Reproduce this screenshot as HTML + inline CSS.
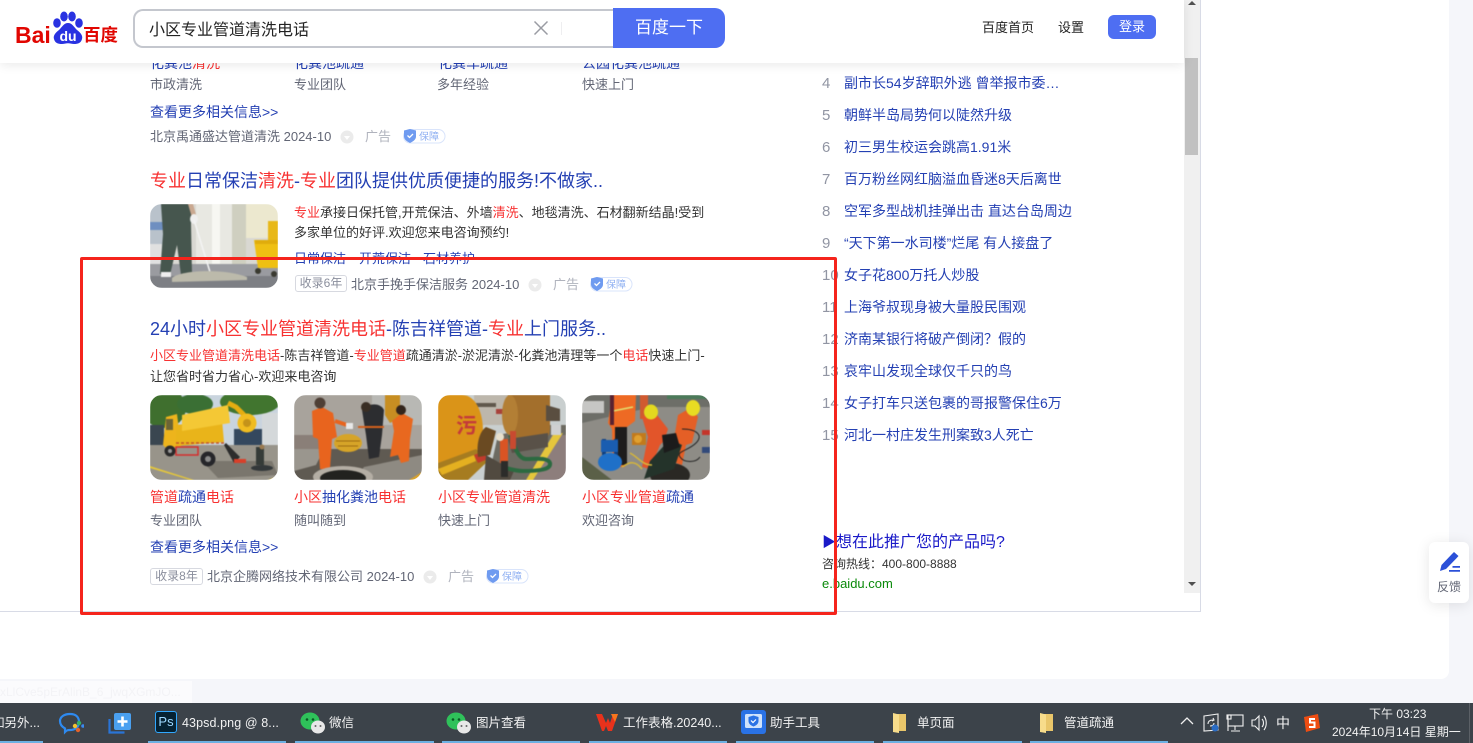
<!DOCTYPE html>
<html lang="zh"><head><meta charset="utf-8"><title>小区专业管道清洗电话</title>
<style>
html,body{margin:0;padding:0;width:1473px;height:743px;overflow:hidden;background:#f5f6fa}
body{position:relative;font-family:"Liberation Sans","Noto Sans CJK SC",sans-serif;font-size:13px;color:#333}
.t{position:absolute;white-space:nowrap;line-height:20px;height:20px}
.b{color:#2440b3}.r{color:#f73131}.g{color:#626675}.l{color:#9195a3}
.h{font-size:18px;line-height:26px;height:26px;color:#2440b3}
.m{font-size:14px}
.n{font-size:15px;margin-top:1px}
.im{position:absolute;border-radius:12px;overflow:hidden;width:128px;height:85px}
.im svg{display:block;filter:blur(.4px)}
.tag{position:absolute;box-sizing:border-box;height:17px;border:1px solid #d7d9e0;border-radius:3px;font-size:12px;line-height:15px;color:#8a8e9c;text-align:center}
.abs{position:absolute}
.tb{position:absolute;white-space:nowrap;color:#f2f2f2;font-size:12.5px;line-height:18px;top:714px}
.ul{position:absolute;top:741px;height:2px;background:#6cb0e2}
</style></head><body>
<!-- page -->
<div class="abs" style="left:0;top:0;width:1449px;height:679px;background:#fff;border-radius:0 0 8px 0"></div>
<div class="abs" style="left:0;top:611px;width:1201px;height:1px;background:#d8dbe6"></div>
<div class="abs" style="left:1200px;top:0;width:1px;height:612px;background:#d8dbe6"></div>
<div class="abs" style="left:1184px;top:0;width:16px;height:593px;background:#f0f0f0"></div>
<div class="abs" style="left:1185px;top:58px;width:13px;height:97px;background:#c1c1c1"></div>
<div class="abs" style="left:1188px;top:1px;width:0;height:0;border:4px solid transparent;border-top:0;border-bottom:4px solid #505050"></div>
<div class="abs" style="left:1188px;top:582px;width:0;height:0;border:4px solid transparent;border-bottom:0;border-top:4px solid #505050"></div>
<div class="abs" style="left:0;top:681px;width:192px;height:22px;background:#fbfbfd;color:#f3f3f6;font-size:12px;line-height:22px;white-space:nowrap;overflow:hidden">xLlCve5pErAlinB_6_jwqXGmJO...</div>

<!-- result 1 tail -->
<div class="t m" style="left:150px;top:53px"><span class="b">化粪池</span><span class="r">清洗</span></div>
<div class="t m b" style="left:294px;top:53px">化粪池疏通</div>
<div class="t m b" style="left:438px;top:53px">化粪车疏通</div>
<div class="t m b" style="left:582px;top:53px">公园化粪池疏通</div>
<div class="t g" style="left:150px;top:75px">市政清洗</div>
<div class="t g" style="left:294px;top:75px">专业团队</div>
<div class="t g" style="left:437px;top:75px">多年经验</div>
<div class="t g" style="left:582px;top:75px">快速上门</div>
<div class="t m b" style="left:150px;top:102px">查看更多相关信息&gt;&gt;</div>
<div class="t g" style="left:150px;top:127px">北京禹通盛达管道清洗 2024-10</div>
<svg class="abs" style="left:340px;top:130px" width="14" height="14"><circle cx="7" cy="7" r="6.5" fill="#ebebeb"/><path d="M4 6h6l-3 4z" fill="#fff"/></svg>
<div class="t" style="left:365px;top:127px;color:#b0b3bd">广告</div>
<svg class="abs" style="left:403px;top:128px" width="43" height="16"><rect x=".5" y="1.5" width="41.5" height="13.5" rx="6.7" fill="#fff" stroke="#d9e4fb"/><path d="M1 2.500l6-1.500 6 1.500v6c0 3-3 5-6 6.500-3-1.500-6-3.500-6-6.500z" fill="#6f9bf0"/><path d="M4.500 7.500l2 2 3.500-3.500" stroke="#fff" stroke-width="1.300" fill="none"/><text x="16" y="12" font-size="10" fill="#8fb0f2" font-family="Noto Sans CJK SC">保障</text></svg>

<!-- result 2 -->
<div class="t h" style="left:150px;top:168px"><span class="r">专业</span>日常保洁<span class="r">清洗</span>-<span class="r">专业</span>团队提供优质便捷的服务!不做家..</div>
<div class="im" style="left:150px;top:204px;height:84px"><svg width="128" height="84" viewBox="0 0 128 84">
<rect width="128" height="84" fill="#d9d8d2"/>
<rect x="0" y="0" width="16" height="60" fill="#b9c2cb"/><rect x="0" y="18" width="14" height="8" fill="#6f8fc0"/><rect x="0" y="40" width="12" height="22" fill="#e0e0e0"/>
<rect x="46" y="0" width="36" height="60" fill="#e8e8e2"/><rect x="62" y="0" width="8" height="62" fill="#f7f7f2"/><rect x="82" y="0" width="14" height="60" fill="#cfcfc0"/><rect x="96" y="0" width="32" height="34" fill="#ece8cf"/>
<rect x="118" y="17" width="10" height="22" fill="#e8b818"/>
<rect x="0" y="60" width="128" height="24" fill="#9a9ba0"/><rect x="0" y="72" width="128" height="12" fill="#7d7f84"/>
<path d="M11 0h31l-1 20 1 50-11 1-4-30-7 30-10-1 3-40z" fill="#46564e"/><path d="M38 0l5 0 4 14-4 3z" fill="#c9a890"/>
<ellipse cx="44" cy="15" rx="4" ry="5" fill="#efefef"/><path d="M44 16l16 52" stroke="#f4f4f4" stroke-width="1.500"/>
<path d="M22 74c8-8 52-10 75-1l0 3-75 2z" fill="#bcbaab"/><rect x="11" y="68" width="10" height="5" fill="#eee"/>
<path d="M104 36h24v28h-20z" fill="#efc013"/><rect x="105" y="36" width="23" height="4" fill="#e0ac0c"/><circle cx="108" cy="67" r="3" fill="#3a3a30"/><circle cx="124" cy="70" r="3" fill="#3a3a30"/>
</svg></div>
<div class="t" style="left:294px;top:203px"><span class="r">专业</span>承接日保托管,开荒保洁、外墙<span class="r">清洗</span>、地毯清洗、石材翻新结晶!受到</div>
<div class="t" style="left:294px;top:223px">多家单位的好评.欢迎您来电咨询预约!</div>
<div class="t b" style="left:294px;top:249px">日常保洁</div>
<div class="t b" style="left:359px;top:249px">开荒保洁</div>
<div class="t b" style="left:423px;top:249px">石材养护</div>
<div class="tag" style="left:295px;top:275px;width:52px">收录6年</div>
<div class="t g" style="left:351px;top:275px">北京手挽手保洁服务 2024-10</div>
<svg class="abs" style="left:528px;top:278px" width="14" height="14"><circle cx="7" cy="7" r="6.500" fill="#ebebeb"/><path d="M4 6h6l-3 4z" fill="#fff"/></svg>
<div class="t" style="left:553px;top:275px;color:#b0b3bd">广告</div>
<svg class="abs" style="left:590px;top:276px" width="43" height="16"><rect x=".5" y="1.500" width="41.500" height="13.500" rx="6.700" fill="#fff" stroke="#d9e4fb"/><path d="M1 2.500l6-1.500 6 1.500v6c0 3-3 5-6 6.500-3-1.500-6-3.500-6-6.500z" fill="#6f9bf0"/><path d="M4.500 7.500l2 2 3.500-3.500" stroke="#fff" stroke-width="1.300" fill="none"/><text x="16" y="12" font-size="10" fill="#8fb0f2" font-family="Noto Sans CJK SC">保障</text></svg>

<!-- result 3 -->
<div class="t h" style="left:150px;top:316px">24小时<span class="r">小区专业管道清洗电话</span>-陈吉祥管道-<span class="r">专业</span>上门服务..</div>
<div class="t" style="left:150px;top:346px"><span class="r">小区专业管道清洗电话</span>-陈吉祥管道-<span class="r">专业管道</span>疏通清淤-淤泥清淤-化粪池清理等一个<span class="r">电话</span>快速上门-</div>
<div class="t" style="left:150px;top:367px">让您省时省力省心-欢迎来电咨询</div>

<div class="im" style="left:150px;top:395px"><svg width="128" height="85" viewBox="0 0 128 85">
<rect width="128" height="85" fill="#c9d4de"/>
<rect x="112" y="18" width="16" height="44" fill="#d4d8da"/><rect x="84" y="34" width="28" height="18" fill="#34485e"/>
<ellipse cx="14" cy="13" rx="22" ry="20" fill="#3f6f2e"/><ellipse cx="45" cy="9" rx="18" ry="10" fill="#3a6f34"/><ellipse cx="100" cy="7" rx="30" ry="13" fill="#41752f"/>
<rect x="0" y="30" width="14" height="22" fill="#3a4650"/>
<rect x="0" y="50" width="128" height="35" fill="#98948a"/><path d="M52 66h70l6 14-60 3z" fill="#7a766d"/>
<path d="M0 71l44 14h-4L0 73z" fill="#e5c73a"/><path d="M118 85l10-4v4z" fill="#e5c73a"/>
<path d="M13 50l3-28 11-3 4 32-14 3z" fill="#edb41c"/><rect x="16" y="24" width="7" height="11" fill="#6c6436"/>
<path d="M26 30l46-5 2 22-48 4z" fill="#e9b41a"/><path d="M32 20l46-10 2 18-48 8z" fill="#f4c835"/>
<path d="M78 8l8 4 8 8" stroke="#e5ad10" stroke-width="5" fill="none"/><circle cx="97" cy="28" r="9.500" fill="#f0bc20"/><circle cx="97" cy="28" r="4" fill="#c4931a"/>
<path d="M26 48l48 0" stroke="#c0502a" stroke-width="1.500" stroke-dasharray="3 2"/>
<rect x="26" y="52" width="22" height="8" fill="none" stroke="#d62c2c" stroke-width="1.500"/>
<circle cx="20" cy="56" r="5.500" fill="#2a2a2a"/><circle cx="20" cy="56" r="2" fill="#999"/><circle cx="58" cy="64" r="7.500" fill="#26262a"/><circle cx="58" cy="64" r="3" fill="#8a8a8a"/>
<path d="M76 48l14 14-6 6-10-18z" fill="#2c2c2c"/><rect x="84" y="64" width="12" height="4" fill="#d8402a"/>
<rect x="106" y="52" width="8" height="18" fill="#353b38"/><circle cx="112" cy="52" r="2.500" fill="#9a7a50"/><ellipse cx="112" cy="73" rx="11" ry="3" fill="#33383a"/>
</svg></div>
<div class="im" style="left:294px;top:395px"><svg width="128" height="85" viewBox="0 0 128 85">
<rect width="128" height="85" fill="#a8a39c"/><rect x="0" y="40" width="30" height="14" fill="#8a7f78"/>
<rect x="78" y="0" width="50" height="30" fill="#b8b8b4"/><path d="M91 0h15v22l-10 6-5-8z" fill="#c78e22"/>
<rect x="0" y="54" width="128" height="31" fill="#5f5a52"/><path d="M0 54l30 0-8 16L0 76z" fill="#9a968e"/><path d="M70 72l58-12v25H60z" fill="#8e8a82"/>
<path d="M18 16l10-4 11 6 4 24-5 2-2 30-10 0-2-30-5-2z" fill="#e8641e"/><ellipse cx="26" cy="8" rx="5.500" ry="5.500" fill="#4e3f35"/><path d="M41 26l12 4" stroke="#e8641e" stroke-width="4"/><rect x="52" y="28" width="7" height="6" fill="#e8e8e8"/>
<path d="M68 15c6-7 18-8 22 0l-2 25-3 22-10 2-3-24z" fill="#2c2d30"/><circle cx="72" cy="12" r="5" fill="#3a2e24"/><rect x="64" y="31" width="26" height="2" fill="#d4601c"/>
<ellipse cx="54" cy="48" rx="14" ry="9" fill="#d6a428"/><path d="M42 46h24M44 51h20" stroke="#9c6a14"/>
<path d="M98 26l10-8 11 6-3 20-1 22-8 2-3-8-8 2 4-26z" fill="#e8681f"/><circle cx="107" cy="15" r="5" fill="#33251c"/>
<ellipse cx="49" cy="82" rx="30" ry="11" fill="#b4aea4"/><ellipse cx="49" cy="83" rx="23" ry="8" fill="#22221f"/>
<path d="M115 85l13-8v8z" fill="#dca42a"/>
</svg></div>
<div class="im" style="left:438px;top:395px"><svg width="128" height="85" viewBox="0 0 128 85">
<rect width="128" height="85" fill="#c9cfcf"/><rect x="36" y="0" width="36" height="30" fill="#bdb7ac"/><rect x="38" y="8" width="20" height="4" fill="#60584c"/><rect x="58" y="14" width="12" height="5" fill="#a8423a"/>
<path d="M60 40l50-10 18 0v55H50z" fill="#6d6b62"/><path d="M128 40v45H92l22-45z" fill="#8d7e7c"/><path d="M125 38l-10 2-27 45h7z" fill="#e5c63c"/>
<path d="M70 0h42v34c0 5-2 8-6 10l-22 3-8-6-6-24z" fill="#a36f2c"/><ellipse cx="72" cy="20" rx="8" ry="20" fill="#b37f35"/><path d="M70 44l40-6v14l-36 6z" fill="#595148"/>
<path d="M108 10l14 4v12h-14z" fill="#5a4e40"/><rect x="113" y="30" width="10" height="10" fill="#cfd0d0"/>
<path d="M0 0h24c14 0 21 18 21 36 0 7-2 14-4 20L0 68z" fill="#da9418"/><text x="18" y="38" font-size="21" fill="#c43a3a" font-family="Noto Sans CJK SC" font-weight="bold">污</text>
<path d="M0 68l38-14 12 12-20 19H0z" fill="#a67c20"/><path d="M0 74l36-14 2 6L4 80z" fill="#e4b020"/><path d="M36 60l10-4 4 8-10 4z" fill="#c23b2c"/>
<path d="M48 32c-6 4-10 16-8 30l12-2 6-24z" fill="#6a4a22"/><path d="M48 60l28 16-4 9H46z" fill="#514a40"/>
<path d="M72 40c4 10 8 24 16 24s22-2 24 4c1 6-8 8-28 8-6 0-12-2-20-4" stroke="#2c6a40" stroke-width="4" fill="none"/>
<rect x="62" y="44" width="8" height="24" fill="#d95424"/><circle cx="62" cy="42" r="4" fill="#e8e0cc"/><rect x="63" y="66" width="7" height="16" fill="#2c2c2a"/><rect x="72" y="36" width="6" height="18" fill="#c84a30"/>
</svg></div>
<div class="im" style="left:582px;top:395px"><svg width="128" height="85" viewBox="0 0 128 85">
<rect width="128" height="85" fill="#8e8c86"/><path d="M0 28l70-16h58V0H0z" fill="#6d6e68"/><rect x="0" y="6" width="22" height="12" fill="#c6c6c4"/>
<path d="M0 62l30 23H0z" fill="#5b6048"/><path d="M85 0h40v4H85z" fill="#4c7a5a"/>
<path d="M30 0h24l-1 26-8 6-2 40-12 0-1-38-4-6z" fill="#ee6a24"/><path d="M31 16l20-4" stroke="#e3e070" stroke-width="1.500"/><rect x="33" y="32" width="12" height="38" fill="#1d1c1c"/><rect x="28" y="0" width="4" height="30" fill="#5a2230"/>
<path d="M58 0h8v24h-8z" fill="#d05a30"/>
<path d="M60 22l12-6 14 18-4 12-4 4-10 24-8-2 6-30z" fill="#e2552a"/><ellipse cx="69" cy="17" rx="7" ry="7.500" fill="#e3d91f"/>
<path d="M96 20l14-8 6 10-6 26-6 2-4 20-6-2-2-24z" fill="#e45f26"/><ellipse cx="111" cy="13" rx="7" ry="8" fill="#e8dc22"/>
<rect x="50" y="38" width="14" height="12" fill="#c27a1c"/><circle cx="56" cy="44" r="4" fill="#e0a030"/>
<rect x="20" y="44" width="4" height="16" fill="#123e7a"/><rect x="32" y="44" width="4" height="16" fill="#123e7a"/><rect x="19" y="45" width="17" height="12" fill="#1a5db0"/><ellipse cx="28" cy="67" rx="12" ry="9" fill="#1f70c8"/>
<ellipse cx="88" cy="80" rx="20" ry="12" fill="#2a2824"/><path d="M62 84l6-18 20-22 12 6-8 24z" fill="#24332a"/><path d="M80 40l14-2 4 14-16 6z" fill="#1b1b1b"/>
<path d="M100 34c14 0 22 6 14 14s-20 8-16 14 16 6 20 0" stroke="#222" fill="none"/><path d="M48 58c8 4 12 12 22 12M40 72c6-4 12-8 20 2" stroke="#d6b63a" stroke-width="1.500" fill="none"/>
<rect x="120" y="35" width="8" height="5" fill="#c4352a"/><rect x="120" y="52" width="8" height="6" fill="#324a7a"/>
</svg></div>

<div class="t m" style="left:150px;top:487px"><span class="r">管道</span><span class="b">疏通</span><span class="r">电话</span></div>
<div class="t m" style="left:294px;top:487px"><span class="r">小区</span><span class="b">抽化粪池</span><span class="r">电话</span></div>
<div class="t m r" style="left:438px;top:487px">小区专业管道清洗</div>
<div class="t m" style="left:582px;top:487px"><span class="r">小区专业管道</span><span class="b">疏通</span></div>
<div class="t g" style="left:150px;top:511px">专业团队</div>
<div class="t g" style="left:294px;top:511px">随叫随到</div>
<div class="t g" style="left:438px;top:511px">快速上门</div>
<div class="t g" style="left:582px;top:511px">欢迎咨询</div>
<div class="t m b" style="left:150px;top:537px">查看更多相关信息&gt;&gt;</div>
<div class="tag" style="left:150px;top:568px;width:53px">收录8年</div>
<div class="t g" style="left:207px;top:567px">北京企腾网络技术有限公司 2024-10</div>
<svg class="abs" style="left:423px;top:570px" width="14" height="14"><circle cx="7" cy="7" r="6.500" fill="#ebebeb"/><path d="M4 6h6l-3 4z" fill="#fff"/></svg>
<div class="t" style="left:448px;top:567px;color:#b0b3bd">广告</div>
<svg class="abs" style="left:486px;top:568px" width="43" height="16"><rect x=".5" y="1.500" width="41.500" height="13.500" rx="6.700" fill="#fff" stroke="#d9e4fb"/><path d="M1 2.500l6-1.500 6 1.500v6c0 3-3 5-6 6.500-3-1.500-6-3.500-6-6.500z" fill="#6f9bf0"/><path d="M4.500 7.500l2 2 3.500-3.500" stroke="#fff" stroke-width="1.300" fill="none"/><text x="16" y="12" font-size="10" fill="#8fb0f2" font-family="Noto Sans CJK SC">保障</text></svg>

<!-- hot list -->
<div style="font-size:14px">
<div class="t l n" style="left:822px;top:73px">4</div><div class="t b" style="left:844px;top:73px">副市长54岁辞职外逃 曾举报市委…</div>
<div class="t l n" style="left:822px;top:105px">5</div><div class="t b" style="left:844px;top:105px">朝鲜半岛局势何以陡然升级</div>
<div class="t l n" style="left:822px;top:137px">6</div><div class="t b" style="left:844px;top:137px">初三男生校运会跳高1.91米</div>
<div class="t l n" style="left:822px;top:169px">7</div><div class="t b" style="left:844px;top:169px">百万粉丝网红脑溢血昏迷8天后离世</div>
<div class="t l n" style="left:822px;top:201px">8</div><div class="t b" style="left:844px;top:201px">空军多型战机挂弹出击 直达台岛周边</div>
<div class="t l n" style="left:822px;top:233px">9</div><div class="t b" style="left:844px;top:233px">“天下第一水司楼”烂尾 有人接盘了</div>
<div class="t l n" style="left:822px;top:265px">10</div><div class="t b" style="left:844px;top:265px">女子花800万托人炒股</div>
<div class="t l n" style="left:822px;top:297px">11</div><div class="t b" style="left:844px;top:297px">上海爷叔现身被大量股民围观</div>
<div class="t l n" style="left:822px;top:329px">12</div><div class="t b" style="left:844px;top:329px">济南某银行将破产倒闭&#xFF1F;假的</div>
<div class="t l n" style="left:822px;top:361px">13</div><div class="t b" style="left:844px;top:361px">哀牢山发现全球仅千只的鸟</div>
<div class="t l n" style="left:822px;top:393px">14</div><div class="t b" style="left:844px;top:393px">女子打车只送包裹的哥报警保住6万</div>
<div class="t l n" style="left:822px;top:425px">15</div><div class="t b" style="left:844px;top:425px">河北一村庄发生刑案致3人死亡</div>
</div>
<div class="t" style="left:822px;top:532px;font-size:16px;color:#1a1ac8"><span style="font-size:14px">▶</span>想在此推广您的产品吗?</div>
<div class="t" style="left:822px;top:554px;font-size:12px;color:#333">咨询热线&#xFF1A;400-800-8888</div>
<div class="t" style="left:822px;top:574px;font-size:13px;color:#0a8a0a">e.baidu.com</div>

<!-- red highlight box -->
<div class="abs" style="left:80px;top:257px;width:757px;height:358px;box-sizing:border-box;border:3px solid #f5241c;border-radius:2px"></div>

<!-- header -->
<div class="abs" style="left:0;top:0;width:1184px;height:63px;background:#fff;box-shadow:0 2px 10px rgba(0,0,0,.09)"></div>
<div class="t" style="left:15px;top:22px;font:bold 23px/26px 'Liberation Sans',sans-serif;color:#e10601;height:26px">Bai</div>
<svg class="abs" style="left:51px;top:11px" width="33" height="35" viewBox="0 0 33 35">
<ellipse cx="6" cy="12" rx="3.800" ry="4.800" fill="#2932e1"/><ellipse cx="13" cy="5.500" rx="3.800" ry="5" fill="#2932e1"/><ellipse cx="21" cy="5.500" rx="3.800" ry="5" fill="#2932e1"/><ellipse cx="28" cy="12" rx="3.800" ry="4.800" fill="#2932e1"/>
<path d="M17 12c4 0 6 4 9 7 4 3 6 6 5 9-1 4-4 5-8 5-2 0-4-.7-6-.7s-4 .7-6 .7c-4 0-7-1-8-5-1-3 1-6 5-9 3-3 5-7 9-7z" fill="#2932e1"/>
<text x="17" y="30" font-family="Liberation Sans" font-size="14" font-weight="bold" fill="#fff" text-anchor="middle">du</text></svg>
<div class="t" style="left:83px;top:22px;font:bold 17.500px/26px 'Noto Sans CJK SC',sans-serif;color:#e10601;height:26px">百度</div>

<div class="abs" style="left:133px;top:9px;width:492px;height:39px;box-sizing:border-box;border:2px solid #c4c7ce;border-right:0;border-radius:10px 0 0 10px;background:#fff"></div>
<div class="t" style="left:149px;top:21px;font-size:16px;color:#222">小区专业管道清洗电话</div>
<svg class="abs" style="left:533px;top:20px" width="16" height="16"><path d="M1.500 1.500l13 13M14.500 1.500l-13 13" stroke="#9a9ca3" stroke-width="1.500"/></svg>
<div class="abs" style="left:561px;top:22px;width:1px;height:13px;background:#eeeef0"></div>
<div class="abs" style="left:613px;top:8px;width:112px;height:40px;background:#4e6ef2;border-radius:0 10px 10px 0;color:#fff;font-size:17px;line-height:40px;text-align:center">百度一下</div>
<div class="t" style="left:982px;top:18px;color:#222">百度首页</div>
<div class="t" style="left:1058px;top:18px;color:#222">设置</div>
<div class="abs" style="left:1108px;top:15px;width:48px;height:24px;background:#4e6ef2;border-radius:6px;color:#fff;text-align:center;line-height:23px">登录</div>

<!-- feedback -->
<div class="abs" style="left:1429px;top:542px;width:40px;height:61px;background:#fff;border-radius:6px;box-shadow:0 2px 14px rgba(0,0,0,.1)"></div>
<svg class="abs" style="left:1438px;top:551px" width="24" height="22"><path d="M2 20l1.500-6L14 3l2-2 4.500 4-2 2.200L8 18z" fill="#2b50d8"/><path d="M11 19h11v1.800H11zM14.500 15h7.500v1.800h-7.500z" fill="#2b50d8"/></svg>
<div class="t" style="left:1437px;top:577px;font-size:12px;color:#626675">反馈</div>

<!-- taskbar -->
<div class="abs" style="left:0;top:703px;width:1473px;height:40px;background:#3c434a"></div>
<div class="abs" style="left:1469px;top:703px;width:1px;height:40px;background:#5b6066"></div>
<div class="ul" style="left:0;width:43px"></div><div class="ul" style="left:148px;width:138px"></div><div class="ul" style="left:295px;width:139px"></div><div class="ul" style="left:442px;width:138px"></div><div class="ul" style="left:589px;width:138px"></div><div class="ul" style="left:736px;width:138px"></div><div class="ul" style="left:883px;width:139px"></div><div class="ul" style="left:1030px;width:138px"></div>
<div class="tb" style="left:-8px">如另外...</div>
<svg class="abs" style="left:58px;top:711px" width="26" height="24"><path d="M12 3c6 0 9 3 9 8 0 6-5 8-9 8-2 0-3 0-5 2v-3.500C3.500 15.500 2 13 2 10c0-4 4-7 10-7z" fill="none" stroke="#2e8af0" stroke-width="2.200"/><circle cx="21" cy="12" r="2.200" fill="#35b06a"/><circle cx="17" cy="15" r="2.200" fill="#f2c12e"/><circle cx="25" cy="15" r="1.800" fill="#3a8af0"/><circle cx="20" cy="19" r="2.200" fill="#e4622a"/></svg>
<svg class="abs" style="left:108px;top:711px" width="24" height="24"><path d="M1.500 8v13.500h15" fill="none" stroke="#2a74d6" stroke-width="2.200"/><rect x="6" y="2" width="17" height="17" rx="2" fill="#4aa0f0"/><path d="M14.500 5.500v10M9.500 10.500h10" stroke="#fff" stroke-width="2.600"/></svg>
<div class="abs" style="left:155px;top:711px;width:22px;height:22px;box-sizing:border-box;background:#062233;border:1px solid #31a8ff;border-radius:3px;color:#9ed8ff;font-size:13px;line-height:19px;text-align:center">Ps</div>
<div class="tb" style="left:182px;letter-spacing:.1px">43psd.png @ 8...</div>
<svg class="abs" style="left:300px;top:711px" width="26" height="23"><ellipse cx="10" cy="10" rx="9.500" ry="8.500" fill="#2fc15a"/><circle cx="7" cy="8.500" r="1.300" fill="#0a5a25"/><circle cx="13" cy="8.500" r="1.300" fill="#0a5a25"/><ellipse cx="18" cy="16" rx="7" ry="6.500" fill="#e8e8e8"/><circle cx="15.500" cy="15" r="1" fill="#666"/><circle cx="20.500" cy="15" r="1" fill="#666"/></svg>
<div class="tb" style="left:329px">微信</div>
<svg class="abs" style="left:446px;top:711px" width="26" height="23"><ellipse cx="10" cy="10" rx="9.500" ry="8.500" fill="#2fc15a"/><circle cx="7" cy="8.500" r="1.300" fill="#0a5a25"/><circle cx="13" cy="8.500" r="1.300" fill="#0a5a25"/><ellipse cx="18" cy="16" rx="7" ry="6.500" fill="#e8e8e8"/><circle cx="15.500" cy="15" r="1" fill="#666"/><circle cx="20.500" cy="15" r="1" fill="#666"/></svg>
<div class="tb" style="left:476px">图片查看</div>
<svg class="abs" style="left:595px;top:712px" width="24" height="21"><path d="M1 2h6l4 9 2-5 2 5 3-9h5l-6 17h-4l-2-5-2 5H7z" fill="#e8321c"/><path d="M16 2h7l-3 8z" fill="#f6761d"/></svg>
<div class="tb" style="left:623px">工作表格.20240...</div>
<svg class="abs" style="left:741px;top:710px" width="25" height="25"><rect width="25" height="24" rx="3" fill="#2a72e5"/><rect x="4" y="4" width="17" height="14" rx="1.500" fill="#cfe2fb"/><path d="M12.500 5.500l5 1.500v4c0 3-2.500 4.500-5 5.500-2.500-1-5-2.500-5-5.500V7z" fill="#2a72e5"/><path d="M10 10.500l2 2 3-3" stroke="#fff" stroke-width="1.200" fill="none"/></svg>
<div class="tb" style="left:770px">助手工具</div>
<svg class="abs" style="left:892px;top:712px" width="15" height="22"><path d="M3 2h11v17H3z" fill="#e9c66a"/><path d="M1 1l6 1.500v18.500l-6-1z" fill="#f7dc8b"/></svg>
<div class="tb" style="left:917px">单页面</div>
<svg class="abs" style="left:1039px;top:712px" width="15" height="22"><path d="M3 2h11v17H3z" fill="#e9c66a"/><path d="M1 1l6 1.500v18.500l-6-1z" fill="#f7dc8b"/></svg>
<div class="tb" style="left:1064px">管道疏通</div>
<svg class="abs" style="left:1180px;top:712px" width="100" height="22" fill="none" stroke="#f0f0f0" stroke-width="1.100">
<path d="M1 12l6-6 6 6" stroke-width="1.300"/>
<path d="M24 4l14-2v16l-14 1z"/><path d="M28 12c0-3 2-4 5-4M33 6l1 2-2 1M34 11c0 2-2 3-4 3"/><circle cx="35" cy="16" r="3.500" fill="#2a6cc4" stroke="none"/>
<rect x="48" y="3" width="15" height="11"/><rect x="47" y="3" width="4" height="4"/><path d="M48 7v12M55 14v4M51 19h9"/>
<path d="M72 8h3l4-4v14l-4-4h-3z"/><path d="M82 7c2 2 2 6 0 8M84 4c3 4 3 10 0 14"/>
</svg>
<div class="tb" style="left:1276px;font-size:14px">中</div>
<svg class="abs" style="left:1303px;top:714px" width="17" height="18"><path d="M1 3l14-3 2 14-14 4z" fill="#ee4d12"/><path d="M12 5H7v3.500h4.500V13H6" stroke="#fff" stroke-width="2" fill="none"/></svg>
<div class="tb" style="left:1369px;top:705px;font-size:12px">下午 03:23</div>
<div class="tb" style="left:1332px;top:723px;font-size:12px">2024年10月14日 星期一</div>
</body></html>
